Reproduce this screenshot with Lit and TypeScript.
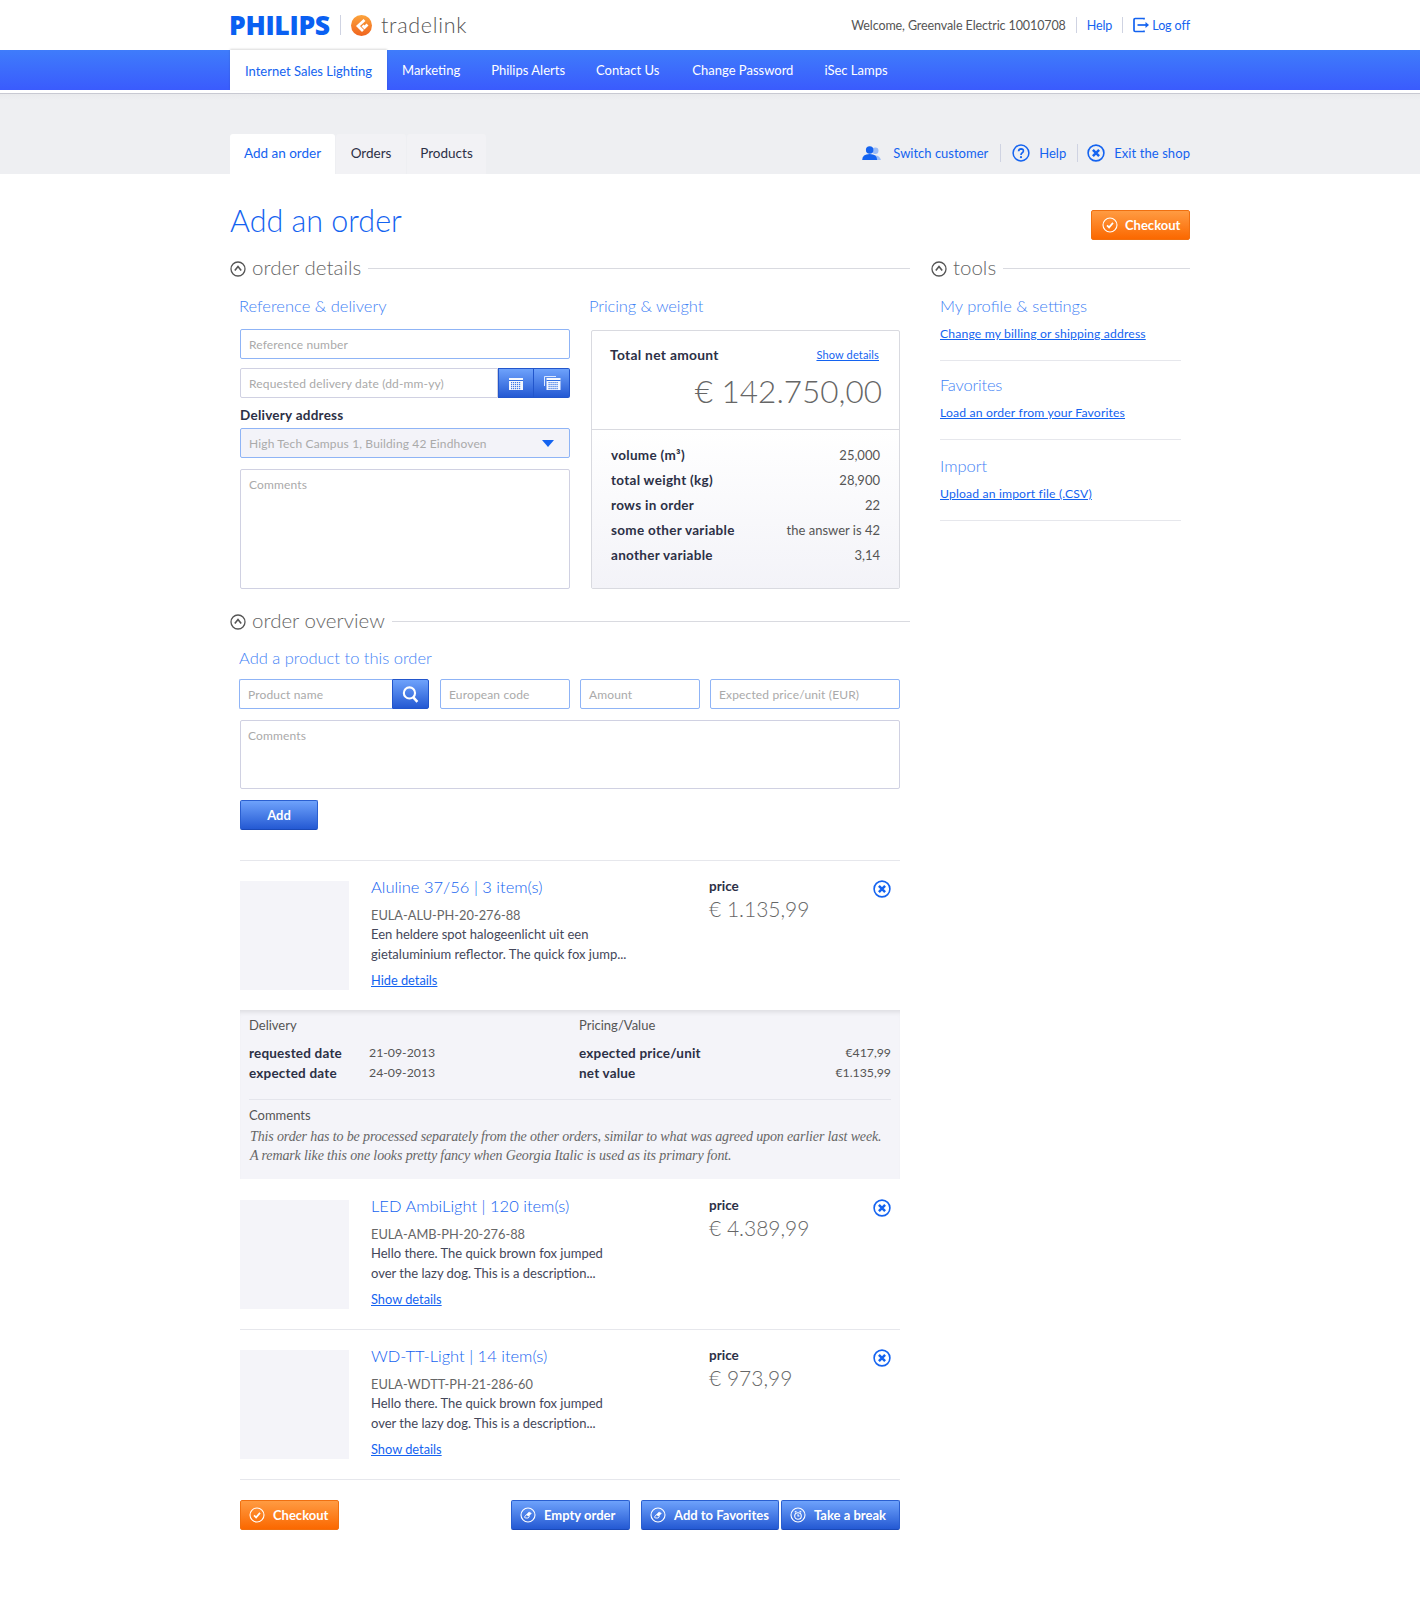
import { LitElement, html, css, svg } from "lit";
import { customElement } from "lit/decorators.js";

const xCircle = (s = 18) => html`<svg width=${s} height=${s} viewBox="0 0 18 18" fill="none" stroke="#1463f0"><circle cx="9" cy="9" r="7.9" stroke-width="1.6"/><path d="M5.900 5.900l6.200 6.200M12.100 5.900l-6.200 6.200" stroke-width="2.500"/></svg>`;
const chev = () => html`<svg width="16" height="16" viewBox="0 0 16 16" fill="none" stroke="#555"><circle cx="8" cy="8" r="7" stroke-width="1.3"/><path d="M4.800 9.600L8 5.600l3.200 4" stroke-width="1.6"/></svg>`;
const check = () => html`<svg width="16" height="16" viewBox="0 0 16 16" fill="none" stroke="#fff"><circle cx="8" cy="8" r="7" stroke-width="1.1"/><path d="M5 8.300l2.100 2.100L11 5.900" stroke-width="1.7"/></svg>`;
const eraser = () => html`<svg width="16" height="16" viewBox="0 0 16 16" fill="none" stroke="#fff"><circle cx="8" cy="8" r="7" stroke-width="1.1"/><path d="M6.200 7.800L9 5l2.400 1.300-2.600 2.900z" fill="#fff" stroke-width=".5"/><path d="M6.200 7.800L4.500 10l.7 1h3l1.400-1.800" stroke-width=".9"/></svg>`;
const alarm = () => html`<svg width="16" height="16" viewBox="0 0 16 16" fill="none" stroke="#fff"><circle cx="8" cy="8" r="7" stroke-width="1.1"/><circle cx="8" cy="9" r="3.300" stroke-width="1.100"/><path d="M8 7.200V9h1.500M4.800 5.300l1.600-1.200M11.200 5.300L9.600 4.100" stroke-width="1.100"/></svg>`;
const cal = (stack: boolean) => html`<svg width="18" height="18" viewBox="0 0 18 18">
  ${stack ? svg`<path d="M1.500 12V2.500H13" fill="none" stroke="#dce8ff" stroke-width="1"/>` : ""}
  <rect x=${stack ? 3.5 : 2} y="4" width="14" height="12" fill="#fff" opacity=".95"/>
  <rect x=${stack ? 3.5 : 2} y="6" width="14" height="1" fill="#2f6ce0"/>
  ${[8, 10, 12, 14].map((y) => [0, 2, 4, 6, 8].map((x) => svg`<rect x=${(stack ? 5.5 : 4) + x} y=${y} width="1.2" height="1.2" fill="#3f78e6"/>`))}
</svg>`;

type Item = { title: string; sku: string; d1: string; d2: string; price: string; link: string };
const items: Item[] = [
  { title: "Aluline 37/56 | 3 item(s)", sku: "EULA-ALU-PH-20-276-88", d1: "Een heldere spot halogeenlicht uit een", d2: "gietaluminium reflector. The quick fox jump...", price: "€ 1.135,99", link: "Hide details" },
  { title: "LED AmbiLight | 120 item(s)", sku: "EULA-AMB-PH-20-276-88", d1: "Hello there. The quick brown fox jumped", d2: "over the lazy dog. This is a description...", price: "€ 4.389,99", link: "Show details" },
  { title: "WD-TT-Light | 14 item(s)", sku: "EULA-WDTT-PH-21-286-60", d1: "Hello there. The quick brown fox jumped", d2: "over the lazy dog. This is a description...", price: "€ 973,99", link: "Show details" },
];
const stats = [
  ["volume (m³)", "25,000"],
  ["total weight (kg)", "28,900"],
  ["rows in order", "22"],
  ["some other variable", "the answer is 42"],
  ["another variable", "3,14"],
];

@customElement("app-root")
export class AppRoot extends LitElement {
  static styles = css`
    :host { display: block; min-height: 1600px; background: #fff; font-family: Lato, "Open Sans", sans-serif; font-size: 13.5px; color: #555; }
    * { box-sizing: border-box; }
    a { color: #1463f0; text-decoration: none; }
    .wrap { width: 960px; margin: 0 auto; }
    .top { height: 50px; }
    .top .wrap { height: 50px; display: flex; align-items: center; }
    .philips { font-family: "Open Sans", sans-serif; font-weight: 800; font-size: 26.5px; letter-spacing: -0.3px; color: #0a60f2; line-height: 1; width: 102px; margin-left: -1px; margin-right: 1px; }
    .vsep { width: 1px; background: #cfd3e2; }
    .logo-sep { height: 20px; margin: 0 10px 0 8px; }
    .logo-mark { display: flex; margin-right: 9px; }
    .tradelink { font-size: 21.5px; font-weight: 300; color: #555; letter-spacing: 0.7px; }
    .top-right { margin-left: auto; display: flex; align-items: center; font-size: 12.5px; letter-spacing: -0.1px; }
    .top-right .vsep { height: 16px; margin: 0 10px; }
    .logoff { display: flex; align-items: center; gap: 2px; }
    .nav { height: 40px; background: linear-gradient(#3f7cfb, #3a5bfd); }
    .nav .wrap { display: flex; height: 40px; }
    .nav a { color: #fff; font-size: 13px; line-height: 40px; margin-left: 31px; }
    .nav a:nth-child(5) { margin-left: 33px; }
    .nav a.active { background: #fff; color: #1463f0; width: 157px; margin: 0 -16px 0 0; text-align: center; line-height: 42px; box-shadow: 0 -1px 2px rgba(0,0,0,.15); }
    .sub { height: 81px; margin-top: 3px; background: #eeeff2; border-top: 1px solid #c8c9d2; background-image: linear-gradient(#e9eaed 0, #eeeff2 6px); }
    .sub .wrap { display: flex; height: 80px; padding-top: 40px; align-items: stretch; }
    .tab { background: #f2f2f5; color: #2c3046; font-size: 13.5px; height: 40px; line-height: 39px; text-align: center; margin-right: 1px; border-radius: 3px 3px 0 0; }
    .tab.active { background: #fff; color: #1463f0; }
    .sub-right { margin-left: auto; display: flex; align-items: center; font-size: 13px; height: 40px; padding-bottom: 2px; }
    .sub-right .vsep { height: 18px; margin: 0 11px 0 12px; }
    .sub-right .vsep.b { margin: 0 9px 0 11px; }
    .sub-right a { display: block; }
    .sub-right a:last-child { letter-spacing: .08px; }
    .icon-left { display: flex; margin-right: 9px; }
    .icon-left.u { margin-right: 11px; }
    .title-row { display: flex; justify-content: space-between; align-items: center; margin-top: 36px; height: 30px; }
    h1 { margin: 0 0 11px; font-size: 30.5px; font-weight: 300; color: #1463f0; line-height: 30px; }
    .btn { display: inline-flex; align-items: center; height: 30px; border-radius: 2px; color: #fff; font-size: 13px; font-weight: 700; white-space: nowrap; }
    .btn svg { margin-right: 7px; flex: none; }
    .orange { background: linear-gradient(#ff9b42, #fb6800); border: 1px solid #f07010; }
    .blue { background: linear-gradient(#6ea2fb, #2459d3); border: 1px solid #2a5fd0; border-bottom-color: #1a49b8; }
    .columns { display: grid; grid-template-columns: 680px 258px; column-gap: 22px; margin-top: 18px; }
    .sec { display: flex; align-items: center; height: 20px; gap: 6px; font-size: 20.5px; font-weight: 300; color: #666; line-height: 20px; }
    .sec svg { margin-top: 2px; }
    .sec .lab { margin-top: -2px; }
    .sec .line { flex: 1; height: 1px; background: #d9dae0; margin-left: 1px; }
    h3 { margin: 0; font-size: 16.5px; font-weight: 300; color: #3f82f5; line-height: 20px; height: 20px; }
    .two { display: grid; grid-template-columns: 330px 309px; column-gap: 21px; margin: 18px 0 0 10px; }
    .two .hl { margin-left: -1px; }
    .two .hr { margin-left: -2px; letter-spacing: -0.1px; }
    .field { display: flex; align-items: center; height: 30px; border: 1px solid #d0d1e2; border-radius: 2px; padding: 0 8px; color: #aaa; font-size: 12px; letter-spacing: 0.15px; background: #fff; white-space: nowrap; }
    .field.on { border-color: #8fb4f6; }
    .field.area { align-items: flex-start; padding-top: 7px; line-height: 16px; }
    .stack { display: grid; margin-top: 13px; }
    .date { display: flex; height: 30px; margin-top: 9px; }
    .date .field { flex: 1; border-radius: 2px 0 0 2px; }
    .sq { display: flex; align-items: center; justify-content: center; background: linear-gradient(#6ea2fb, #2459d3); border: 1px solid #2256cc; }
    .date .sq { width: 36px; }
    .date .sq:last-child { width: 36px; border-left: 0; border-radius: 0 2px 2px 0; }
    .lbl { font-weight: 700; color: #2c3046; font-size: 13.5px; line-height: 16px; margin-top: 9px; letter-spacing: .25px; }
    .select { background: #f3f3f9; margin-top: 5px; justify-content: space-between; }
    .tri { width: 0; height: 0; border-left: 6px solid transparent; border-right: 6px solid transparent; border-top: 7px solid #1463f0; margin-right: 7px; }
    .card { margin-top: 14px; height: 259px; border: 1px solid #d9dae0; border-radius: 2px; background: #fff; }
    .card-top { height: 99px; border-bottom: 1px solid #d9dae0; padding: 15px 17px 0 18px; }
    .card-head { display: flex; justify-content: space-between; align-items: center; height: 16px; padding-right: 3px; }
    .card-head b { color: #2c3046; font-size: 13.8px; letter-spacing: .3px; }
    .card-head a { font-size: 11px; text-decoration: underline; letter-spacing: .15px; }
    .amount { text-align: right; font-size: 31.500px; font-weight: 300; color: #666; line-height: 40px; margin-top: 9px; }
    .card-bot { height: 158px; padding: 13px 19px 0 19px; background: linear-gradient(#fff, #f3f3f8); }
    .stat { display: flex; justify-content: space-between; height: 25px; line-height: 25px; }
    .stat span { font-size: 13px; }
    .stat b { color: #2c3046; letter-spacing: .3px; }
    .sec.ov { margin-top: 22px; }
    .ovb { margin-left: 10px; width: 660px; }
    .ovb h3 { margin: 17px 0 0 -1px; }
    .prod { display: flex; margin-top: 11px; margin-left: -1px; }
    .prod .search { display: flex; width: 190px; margin-right: 11px; }
    .search .field { flex: 1; border-right: 0; border-radius: 2px 0 0 2px; }
    .search .sq { width: 37px; border-radius: 0 2px 2px 0; }
    .ovb .note { height: 69px; margin-top: 11px; padding-left: 7px; }
    .add { width: 78px; justify-content: center; margin-top: 11px; height: 30px; }
    .rows { margin-top: 30px; border-top: 1px solid #e6e7ec; }
    .item { display: flex; padding: 20px 0; height: 149px; }
    .item.sep { border-bottom: 1px solid #e6e7ec; height: 150px; }
    .thumb { width: 109px; height: 109px; background: #f4f4f9; flex: none; }
    .info { margin-left: 22px; width: 338px; }
    .info h4 { margin: -4px 0 0; font-size: 16.5px; font-weight: 300; color: #1463f0; line-height: 20px; }
    .sku { margin-top: 9px; line-height: 18px; color: #666; font-size: 12.8px; }
    .desc { color: #44475a; line-height: 20px; font-size: 13px; }
    .info a.ul { display: inline-block; margin-top: 6px; text-decoration: underline; line-height: 20px; font-size: 12.8px; }
    .price { width: 164px; }
    .price b { display: block; color: #2c3046; line-height: 16px; margin-top: -3px; font-size: 13.5px; }
    .price div { font-size: 21px; font-weight: 300; color: #666; line-height: 30px; }
    .rm { margin-top: -1px; }
    .panel { background: #f4f4f9; height: 169px; box-shadow: inset 0 5px 5px -3px rgba(0,0,0,.1); padding: 6px 9px 0; margin-bottom: 1px; }
    .pgrid { display: grid; grid-template-columns: 330px 312px; }
    .ph { line-height: 18px; font-size: 13px; }
    .pr { display: flex; height: 20px; line-height: 20px; }
    .pr b { color: #2c3046; width: 120px; letter-spacing: .2px; }
    .pr span { font-size: 12.3px; }
    .rows2 { margin-top: 9px; }
    .pr.sp { justify-content: space-between; }
    .pr.sp b { width: auto; }
    .pdiv { height: 1px; background: #e4e5ec; margin-top: 16px; }
    .cmt { margin-top: 6px; line-height: 18px; font-size: 13px; }
    .ital { font-family: "Liberation Serif", serif; font-style: italic; font-size: 14px; line-height: 18.500px; color: #666; margin-top: 4px; letter-spacing: -0.13px; white-space: nowrap; margin-left: 1px; }
    .actions { display: flex; margin-top: 20px; }
    .actions .btn { padding-left: 8px; }
    .actions .btn svg { margin-right: 8px; }
    .push { margin-left: auto; }
    .tools { padding-left: 8px; }
    .tool { width: 241px; border-bottom: 1px solid #e6e7ec; }
    .tool a { display: block; line-height: 16px; text-decoration: underline; font-size: 12.2px; letter-spacing: .15px; }
    .t1 { height: 83px; padding-top: 18px; }
    .t1 a, .t3 a { margin-top: 10px; }
    .t2 { height: 79px; padding-top: 14px; }
    .t2 h3 { letter-spacing: -0.2px; }
    .t2 a { margin-top: 10px; }
    .t3 { height: 81px; padding-top: 16px; }
    .sec.t { margin-left: -1px; }
  `;

  private item(i: Item, sep: boolean) {
    return html`<div class="item ${sep ? "sep" : ""}">
      <div class="thumb"></div>
      <div class="info">
        <h4>${i.title}</h4>
        <div class="sku">${i.sku}</div>
        <div class="desc">${i.d1}<br />${i.d2}</div>
        <a class="ul" href="#">${i.link}</a>
      </div>
      <div class="price"><b>price</b><div>${i.price}</div></div>
      <a class="rm" href="#">${xCircle()}</a>
    </div>`;
  }

  render() {
    return html`
      <div class="top"><div class="wrap">
        <span class="philips">PHILIPS</span>
        <span class="vsep logo-sep"></span>
        <span class="logo-mark"><svg width="21" height="21" viewBox="0 0 21 21"><defs><linearGradient id="lg" x1="0" y1="0" x2="0" y2="1"><stop offset="0" stop-color="#fca43c"/><stop offset="1" stop-color="#f0641e"/></linearGradient></defs><circle cx="10.500" cy="10.500" r="10.500" fill="url(#lg)"/><path d="M13.500 5L7 11l5 5M11.500 10.500l2 2 3-3" fill="none" stroke="#fff" stroke-width="2.800"/></svg></span>
        <span class="tradelink">tradelink</span>
        <div class="top-right">
          <span>Welcome, Greenvale Electric 10010708</span><span class="vsep"></span>
          <a href="#">Help</a><span class="vsep"></span>
          <a class="logoff" href="#"><svg width="17" height="16" viewBox="0 0 17 16" fill="none" stroke="#1463f0"><path d="M11 2.500V1.500H2.200Q1 1.500 1 2.700v10.600Q1 14.500 2.200 14.500H11v-1" stroke-width="1.7"/><path d="M4.500 8H13" stroke-width="1.7"/><path d="M12.500 5l3.500 3-3.500 3z" fill="#1463f0" stroke="none"/></svg>Log off</a>
        </div>
      </div></div>
      <div class="nav"><div class="wrap">
        <a class="active" href="#">Internet Sales Lighting</a>
        <a href="#">Marketing</a><a href="#">Philips Alerts</a><a href="#">Contact Us</a><a href="#">Change Password</a><a href="#">iSec Lamps</a>
      </div></div>
      <div class="sub"><div class="wrap">
        <div class="tab active" style="width:105px">Add an order</div>
        <div class="tab" style="width:70px">Orders</div>
        <div class="tab" style="width:79px">Products</div>
        <div class="sub-right">
          <span class="icon-left u"><svg width="20" height="15" viewBox="0 0 21 16"><circle cx="14" cy="5" r="3.400" fill="#9bbcf6"/><path d="M9 15q0-5 5-5t6 5z" fill="#9bbcf6"/><circle cx="8" cy="4.200" r="4" fill="#1463f0"/><path d="M0 15q0-6.500 8-6.500t8 6.500z" fill="#1463f0"/></svg></span>
          <a href="#">Switch customer</a><span class="vsep"></span>
          <span class="icon-left"><svg width="18" height="18" viewBox="0 0 18 18" fill="none" stroke="#1463f0"><circle cx="9" cy="9" r="7.900" stroke-width="1.500"/><path d="M6.600 7.200Q6.800 4.800 9.100 4.800 11.500 4.900 11.400 7 11.300 8.200 10 8.900 9 9.500 9 11" stroke-width="1.700"/><circle cx="9" cy="13.200" r="1.100" fill="#1463f0" stroke="none"/></svg></span>
          <a href="#">Help</a><span class="vsep b"></span>
          <span class="icon-left">${xCircle()}</span>
          <a href="#">Exit the shop</a>
        </div>
      </div></div>
      <div class="wrap">
        <div class="title-row"><h1>Add an order</h1>
          <div class="btn orange" style="width:99px;padding-left:10px">${check()}Checkout</div></div>
        <div class="columns">
          <div>
            <div class="sec">${chev()}<span class="lab">order details</span><span class="line"></span></div>
            <div class="two">
              <div>
                <h3 class="hl">Reference &amp; delivery</h3>
                <div class="stack"><div class="field on">Reference number</div></div>
                <div class="date"><div class="field">Requested delivery date (dd-mm-yy)</div><div class="sq">${cal(false)}</div><div class="sq">${cal(true)}</div></div>
                <div class="lbl">Delivery address</div>
                <div class="field on select">High Tech Campus 1, Building 42 Eindhoven<span class="tri"></span></div>
                <div class="field area" style="height:120px;margin-top:11px">Comments</div>
              </div>
              <div>
                <h3 class="hr">Pricing &amp; weight</h3>
                <div class="card">
                  <div class="card-top">
                    <div class="card-head"><b>Total net amount</b><a href="#">Show details</a></div>
                    <div class="amount">€ 142.750,00</div>
                  </div>
                  <div class="card-bot">${stats.map(([k, v]) => html`<div class="stat"><b>${k}</b><span>${v}</span></div>`)}</div>
                </div>
              </div>
            </div>
            <div class="sec ov">${chev()}<span class="lab">order overview</span><span class="line"></span></div>
            <div class="ovb">
              <h3>Add a product to this order</h3>
              <div class="prod">
                <div class="search"><div class="field on">Product name</div><div class="sq"><svg width="19" height="19" viewBox="0 0 18 18" fill="none" stroke="#fff"><circle cx="8" cy="7.500" r="5.300" stroke-width="2"/><path d="M11.500 11.500l4 4.500" stroke-width="2.400"/></svg></div></div>
                <div class="field on" style="width:130px;margin-right:10px">European code</div>
                <div class="field on" style="width:120px;margin-right:10px">Amount</div>
                <div class="field on" style="width:190px">Expected price/unit (EUR)</div>
              </div>
              <div class="field area note">Comments</div>
              <div class="btn blue add">Add</div>
              <div class="rows">
                ${this.item(items[0], false)}
                <div class="panel">
                  <div class="pgrid">
                    <div>
                      <div class="ph">Delivery</div>
                      <div class="rows2">
                        <div class="pr"><b>requested date</b><span>21-09-2013</span></div>
                        <div class="pr"><b>expected date</b><span>24-09-2013</span></div>
                      </div>
                    </div>
                    <div>
                      <div class="ph">Pricing/Value</div>
                      <div class="rows2">
                        <div class="pr sp"><b>expected price/unit</b><span>€417,99</span></div>
                        <div class="pr sp"><b>net value</b><span>€1.135,99</span></div>
                      </div>
                    </div>
                  </div>
                  <div class="pdiv"></div>
                  <div class="cmt">Comments</div>
                  <div class="ital">This order has to be processed separately from the other orders, similar to what was agreed upon earlier last week.<br />A remark like this one looks pretty fancy when Georgia Italic is used as its primary font.</div>
                </div>
                ${this.item(items[1], true)}
                ${this.item(items[2], true)}
              </div>
              <div class="actions">
                <div class="btn orange" style="width:99px">${check()}Checkout</div>
                <div class="btn blue push" style="width:119px">${eraser()}Empty order</div>
                <div class="btn blue" style="width:138px;margin-left:11px">${eraser()}Add to Favorites</div>
                <div class="btn blue" style="width:119px;margin-left:2px">${alarm()}Take a break</div>
              </div>
            </div>
          </div>
          <div>
            <div class="sec t">${chev()}<span class="lab">tools</span><span class="line"></span></div>
            <div class="tools">
              <div class="tool t1"><h3>My profile &amp; settings</h3><a href="#">Change my billing or shipping address</a></div>
              <div class="tool t2"><h3>Favorites</h3><a href="#">Load an order from your Favorites</a></div>
              <div class="tool t3"><h3>Import</h3><a href="#">Upload an import file (.CSV)</a></div>
            </div>
          </div>
        </div>
      </div>
    `;
  }
}
